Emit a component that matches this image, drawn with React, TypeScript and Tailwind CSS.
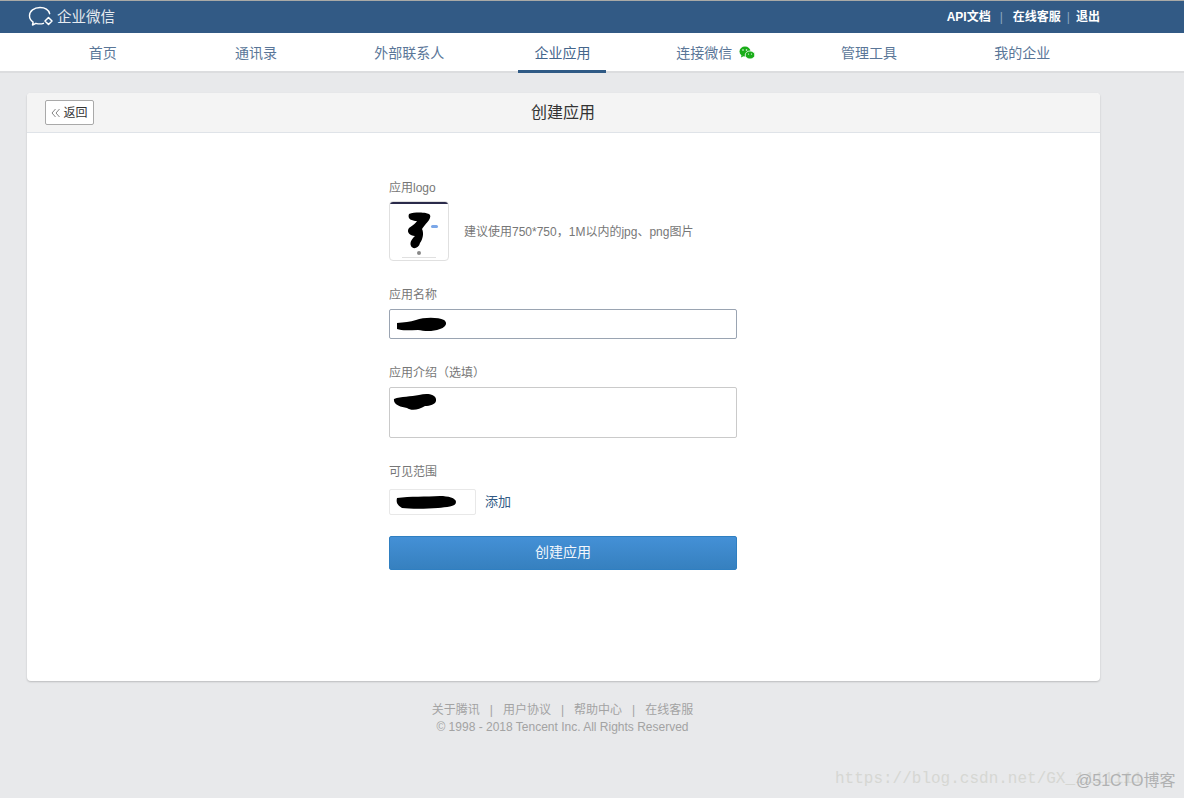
const font = { fontFamily: '"Liberation Sans", "Noto Sans CJK SC", sans-serif' };

function Scribble({ d, w, h }: { d: string; w: number; h: number }) {
  return (
    <svg width={w} height={h} viewBox={`0 0 ${w} ${h}`} className="block">
      <path d={d} fill="#000" />
    </svg>
  );
}

const navItems = ["首页", "通讯录", "外部联系人", "企业应用", "连接微信", "管理工具", "我的企业"];

function Logo() {
  return (
    <svg width="26" height="22" viewBox="0 0 26 22" fill="none" stroke="#fff" strokeWidth="1.4" className="block">
      <path d="M15.500 17.300C14.300 17.700 13.100 17.900 12 17.900c-1.400 0-2.700-.2-4.100-.6L4.500 19l.6-3C2.900 14.500 1.500 12.300 1.500 9.700 1.500 5.100 6 1.500 12 1.500c4.800 0 8.600 2.400 9.700 6.200" strokeLinecap="round" strokeLinejoin="round" />
      <path d="M20.500 11.500l3.500 3.500-3.500 3.500-3.500-3.500z" strokeWidth="1.500" strokeLinejoin="round" />
    </svg>
  );
}

function WeChat() {
  return (
    <svg width="16" height="14" viewBox="0 0 16 14" className="block">
      <ellipse cx="6" cy="5.500" rx="5.500" ry="5" fill="#1aad19" />
      <path d="M2.500 9l-.5 2.500 3-1.500z" fill="#1aad19" />
      <ellipse cx="11" cy="9" rx="4.800" ry="4" fill="#1aad19" stroke="#fff" strokeWidth="0.800" />
      <circle cx="4" cy="4" r="0.800" fill="#fff" />
      <circle cx="7.500" cy="4" r="0.800" fill="#fff" />
      <circle cx="9.500" cy="8" r="0.600" fill="#fff" />
      <circle cx="12.500" cy="8" r="0.600" fill="#fff" />
    </svg>
  );
}

function Chevrons() {
  return (
    <svg width="10" height="10" viewBox="0 0 10 10" fill="none" stroke="#777" strokeWidth="0.900" className="mr-[2px] block">
      <path d="M4.500 1L1 5l3.500 4M8.500 1L5 5l3.500 4" />
    </svg>
  );
}

export default function App() {
  return (
    <div className="relative h-[798px] w-[1184px] overflow-hidden bg-[#e8e9eb]" style={font}>
      <header className="flex h-[33px] items-center justify-between border-t border-[#a9a9a6] bg-[#325a85] pl-[28px] pr-[84px]">
        <div className="flex items-center gap-[3px] text-[14.500px] text-[#e6ebf1]">
          <Logo />
          <span className="pt-[2px]">企业微信</span>
        </div>
        <div className="flex items-center text-[12px] font-bold text-white">
          <span>API文档</span>
          <span className="ml-[9px] mr-[10px] font-normal text-[#8ea6c0]">|</span>
          <span>在线客服</span>
          <span className="mx-[6px] font-normal text-[#8ea6c0]">|</span>
          <span>退出</span>
        </div>
      </header>

      <nav className="h-[40px] border-b-2 border-[#dcdddf] bg-white pl-[26px] pr-[85px]">
        <div className="grid h-[40px] grid-cols-7">
          {navItems.map((item, i) => (
            <div key={item} className="flex justify-center">
              <div className={`flex h-[40px] items-center px-[16px] text-[14px] ${i === 3 ? "border-b-[3px] border-[#2f5a85] pt-[3px] text-[#44658b]" : "text-[#5a7698]"}`}>
                <span>{item}</span>
                {i === 4 && <span className="ml-[7px]"><WeChat /></span>}
              </div>
            </div>
          ))}
        </div>
      </nav>

      <main className="ml-[27px] mt-[20px] h-[588px] w-[1073px] rounded-[4px] bg-white shadow-[0_1px_2px_rgba(0,0,0,0.2)]">
        <div className="relative flex h-[40px] items-center justify-center rounded-t-[4px] border-b border-[#dfe3e8] bg-[#f4f4f4]">
          <button className="absolute left-[18px] top-[7px] flex h-[25px] w-[49px] items-center justify-center rounded-[2px] border border-[#a9a9a9] bg-white text-[12px] text-[#333]">
            <Chevrons />返回
          </button>
          <h1 className="pr-[1px] text-[16px] font-normal text-[#333]">创建应用</h1>
        </div>

        <form className="ml-[362px] w-[348px] pt-[48px] text-[12px] text-[#777]">
          <label className="block h-[17px] leading-[15px]">应用logo</label>
          <div className="mt-[3px] flex items-center">
            <div className="relative h-[60px] w-[60px] overflow-hidden rounded-[4px] border border-[#e0e0e0] bg-white">
              <div className="absolute left-0 right-0 top-0 h-[2px] bg-[#2a2a4a]" />
              <div className="absolute left-[16px] top-[10px]">
                <Scribble w={26} h={38} d="M3 2 C9 0 21 0 24 3 C26 7 18 13 16 17 C18 21 17 27 14 31 C13 36 7 38 5 34 C3 30 7 26 9 24 C4 24 0 20 3 16 C7 13 10 11 11 9 C6 9 1 7 3 2 Z" />
              </div>
              <div className="absolute left-[41px] top-[23px] h-[3px] w-[7px] rounded-full bg-[#7ba7e8]" />
              <div className="absolute left-[27px] top-[49px] h-[4px] w-[4px] rounded-full bg-[#888]" />
              <div className="absolute left-[12px] top-[55px] h-px w-[34px] bg-[#e0e0e0]" />
            </div>
            <span className="ml-[15px] mt-[1px]">建议使用750*750，1M以内的jpg、png图片</span>
          </div>

          <label className="mt-[27px] block h-[16px] leading-[15px]">应用名称</label>
          <div className="mt-[5px] flex h-[30px] items-center rounded-[2px] border border-[#9aa4b2] pl-[6px]">
            <Scribble w={51} h={15} d="M1 6 C8 5 14 5 20 3 C28 0 42 0 48 3 C52 6 50 10 44 12 C36 15 28 14 22 13 C14 13 6 14 1 12 Z" />
          </div>

          <label className="mt-[27px] block h-[16px] leading-[15px]">应用介绍（选填）</label>
          <div className="mt-[5px] h-[51px] rounded-[2px] border border-[#cacaca] pl-[3px] pt-[5px]">
            <Scribble w={43} h={18} d="M1 6 C8 3 18 4 26 2 C34 0 42 1 43 6 C44 11 38 13 32 13 C26 17 18 18 14 15 C8 14 0 12 1 6 Z" />
          </div>

          <label className="mt-[27px] block h-[16px] leading-[15px]">可见范围</label>
          <div className="mt-[8px] flex items-center">
            <div className="flex h-[26px] w-[87px] items-center rounded-[2px] border border-[#e8e8e8] pl-[6px]">
              <Scribble w={60} h={13} d="M1 2 C14 0 30 1 44 0 C52 0 60 2 60 6 C60 11 50 11 42 12 C30 13 14 13 6 12 C1 9 0 6 1 2 Z" />
            </div>
            <span className="ml-[9px] text-[13px] text-[#325a85]">添加</span>
          </div>

          <button type="button" className="mt-[21px] block h-[34px] w-[348px] rounded-[2px] border border-[#2f7fc1] bg-gradient-to-b from-[#4490d6] to-[#3680bf] pb-[2px] text-[14px] text-[#f2f7fc]">
            创建应用
          </button>
        </form>
      </main>

      <footer className="ml-[26px] mt-[21px] flex w-[1073px] flex-col items-center text-[12px] leading-[17px] text-[#a3a3a3]">
        <div className="flex gap-[10px]">
          <span>关于腾讯</span>
          <span>|</span>
          <span>用户协议</span>
          <span>|</span>
          <span>帮助中心</span>
          <span>|</span>
          <span>在线客服</span>
        </div>
        <div>© 1998 - 2018 Tencent Inc. All Rights Reserved</div>
      </footer>

      <div className="absolute left-[835px] top-[767px] whitespace-nowrap text-[16px] text-[#d6d7d3]" style={{ fontFamily: '"Liberation Mono", monospace' }}>
        https://blog.csdn.net/GX_1111111
      </div>
      <div className="absolute left-[1076px] top-[769px] whitespace-nowrap text-[16px] text-[#b0b1b2]">@51CTO博客</div>
    </div>
  );
}
